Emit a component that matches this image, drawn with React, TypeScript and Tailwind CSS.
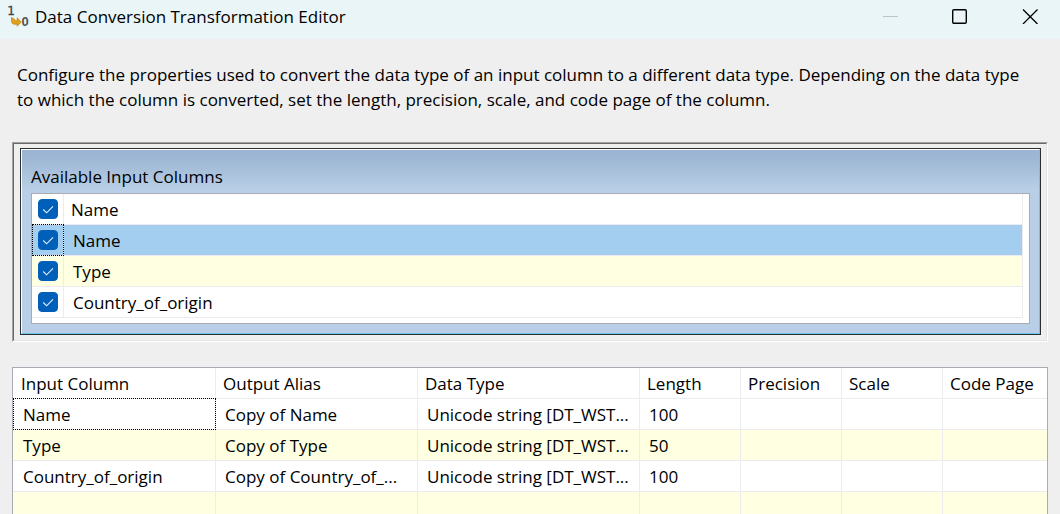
import { useState } from "react";

const inputColumns = [
  { id: "all", name: "Name", tone: "bg-white", pad: "pl-[7px]" },
  { id: "name", name: "Name", tone: "bg-[#a4cef0]", pad: "pl-[9px]" },
  { id: "type", name: "Type", tone: "bg-[#ffffe1]", pad: "pl-[9px]" },
  { id: "country", name: "Country_of_origin", tone: "bg-white", pad: "pl-[9px]" },
];

const headers = [
  { label: "Input Column", width: "w-[203px]" },
  { label: "Output Alias", width: "w-[202px]" },
  { label: "Data Type", width: "w-[222px]" },
  { label: "Length", width: "w-[101px]" },
  { label: "Precision", width: "w-[101px]" },
  { label: "Scale", width: "w-[101px]" },
  { label: "Code Page", width: "" },
];

const rows = [
  ["Name", "Copy of Name", "Unicode string [DT_WST...", "100", "", "", ""],
  ["Type", "Copy of Type", "Unicode string [DT_WST...", "50", "", "", ""],
  ["Country_of_origin", "Copy of Country_of_...", "Unicode string [DT_WST...", "100", "", "", ""],
  ["", "", "", "", "", "", ""],
];

function FocusRect({ className }: { className: string }) {
  return (
    <span
      aria-hidden="true"
      className={`pointer-events-none absolute border border-dotted border-black ${className}`}
    />
  );
}

function AppIcon() {
  return (
    <svg width="24" height="24" viewBox="0 0 24 24" aria-hidden="true" className="shrink-0">
      <text x="4" y="10" textAnchor="middle" fontFamily="DejaVu Sans" fontSize="12" fill="#3f4345" stroke="#3f4345" strokeWidth="0.3">
        1
      </text>
      <path
        d="M4.5 12.5L7.8 14.5V15.8H10.2V12.8L14.2 17L10.2 21.2V19.2H7Q4.6 18.8 4.5 16.5Z"
        fill="#e2a01c"
        stroke="#bd800f"
        strokeWidth="0.7"
      />
      <text x="18" y="21" textAnchor="middle" fontFamily="Liberation Sans" fontSize="13" fontWeight="bold" fill="#505456">
        0
      </text>
    </svg>
  );
}

function TitleBar() {
  const button = "flex h-8 w-[30px] items-center justify-center";
  return (
    <header className="flex h-[39px] shrink-0 items-start justify-between bg-[#eaf5f8] pr-[15px] pl-[7px]">
      <div className="flex items-center gap-1 pt-1">
        <AppIcon />
        <h1 className="text-[17px] leading-[25px]">Data Conversion Transformation Editor</h1>
      </div>
      <div className="flex gap-10">
        <button type="button" aria-label="Minimize" disabled className={button}>
          <svg width="16" height="16" viewBox="0 0 16 16">
            <path d="M1 8.5H16" stroke="#bcc4c6" />
          </svg>
        </button>
        <button type="button" aria-label="Maximize" className={button}>
          <svg width="16" height="16" viewBox="0 0 16 16" fill="none">
            <rect x="0.7" y="1.7" width="13.6" height="13.6" rx="1.2" stroke="#000" strokeWidth="1.4" />
          </svg>
        </button>
        <button type="button" aria-label="Close" className={button}>
          <svg width="16" height="16" viewBox="0 0 16 16">
            <path d="M1 1.5L15.5 16M15.5 1.5L1 16" stroke="#000" strokeWidth="1.3" />
          </svg>
        </button>
      </div>
    </header>
  );
}

function AvailableColumns() {
  const [checked, setChecked] = useState<Record<string, boolean>>({
    all: true,
    name: true,
    type: true,
    country: true,
  });
  return (
    <section className="border border-t-[#a0a0a0] border-r-white border-b-white border-l-[#a0a0a0]">
      <div className="border border-t-[#696969] border-r-[#e3e3e3] border-b-[#e3e3e3] border-l-[#696969] pt-1 pr-[5px] pb-[5px] pl-1.5">
        <div className="border border-[#2b2f33]">
          <div className="border border-t-white border-r-[#6cc5e8] border-b-[#6cc5e8] border-l-white bg-[#b9cfe7] bg-[linear-gradient(#9ab4d1_0px,#a0b9d5_12px,#b9cfe7_40px)] px-[9px] pb-[9px]">
            <h2 className="pt-3.5 pb-1 text-[17px] leading-[25px]">Available Input Columns</h2>
            <div className="border border-[#a9abb3] bg-white pr-1.5 pb-[5px]">
              <table className="w-full table-fixed border-separate border-spacing-0">
                <tbody>
                  {inputColumns.map((col) => (
                    <tr key={col.id}>
                      <td
                        className={`relative h-[31px] w-8 border-r border-b border-[#ececf0] p-0 ${col.tone}`}
                      >
                        <span className="relative ml-1.5 block size-5">
                          <input
                            id={col.id}
                            type="checkbox"
                            checked={checked[col.id]}
                            onChange={(e) => setChecked({ ...checked, [col.id]: e.target.checked })}
                            className="peer block size-5 appearance-none rounded border border-[#005fb8] bg-white checked:bg-[#005fb8]"
                          />
                          <svg
                            viewBox="0 0 20 20"
                            fill="none"
                            className="pointer-events-none absolute inset-0 hidden size-5 peer-checked:block"
                          >
                            <path d="M5.3 10.5L8.6 13.8L15 7.3" stroke="#e8f1fa" strokeWidth="1.1" />
                          </svg>
                        </span>
                        {col.id === "name" && <FocusRect className="-top-px right-[-1px] bottom-[-1px] left-0" />}
                      </td>
                      <td className={`border-r border-b border-[#ececf0] p-0 ${col.pad} ${col.tone}`}>
                        <label htmlFor={col.id} className="block text-[17px] leading-[25px]">
                          {col.name}
                        </label>
                      </td>
                    </tr>
                  ))}
                </tbody>
              </table>
            </div>
          </div>
        </div>
      </div>
    </section>
  );
}

function ConversionGrid() {
  return (
    <div className="mt-[25px] min-h-0 flex-1 overflow-hidden border border-b-0 border-[#a9abb3] bg-white">
      <table className="w-full table-fixed border-separate border-spacing-0 text-[17px] leading-[25px]">
        <thead>
          <tr>
            {headers.map((h) => (
              <th
                key={h.label}
                scope="col"
                className={`h-[31px] border-r border-b border-[#ececf0] py-0 pr-0 pl-[7px] text-left font-normal whitespace-nowrap first:pl-2 last:border-r-0 ${h.width}`}
              >
                {h.label}
              </th>
            ))}
          </tr>
        </thead>
        <tbody>
          {rows.map((row, r) => (
            <tr key={r} className={r % 2 ? "bg-[#ffffe1]" : "bg-white"}>
              {row.map((cell, c) => (
                <td
                  key={c}
                  className="relative h-[31px] border-r border-b border-[#ececf0] py-0 pr-0 pl-[9px] whitespace-nowrap first:pl-[10px] last:border-r-0"
                >
                  {cell}
                  {r === 0 && c === 0 && <FocusRect className="-top-px right-[-1px] bottom-[-1px] left-0" />}
                </td>
              ))}
            </tr>
          ))}
        </tbody>
      </table>
    </div>
  );
}

export default function App() {
  return (
    <div className="flex h-screen flex-col overflow-hidden bg-[#efefef] font-['Open_Sans',sans-serif] text-black">
      <TitleBar />
      <main className="flex min-h-0 flex-1 flex-col px-3 pt-[23px]">
        <p className="mb-[30px] pr-4 pl-[5px] text-[17px] leading-[25px]">
          Configure the properties used to convert the data type of an input column to a different data type. Depending
          on the data type to which the column is converted, set the length, precision, scale, and code page of the
          column.
        </p>
        <AvailableColumns />
        <ConversionGrid />
      </main>
    </div>
  );
}
